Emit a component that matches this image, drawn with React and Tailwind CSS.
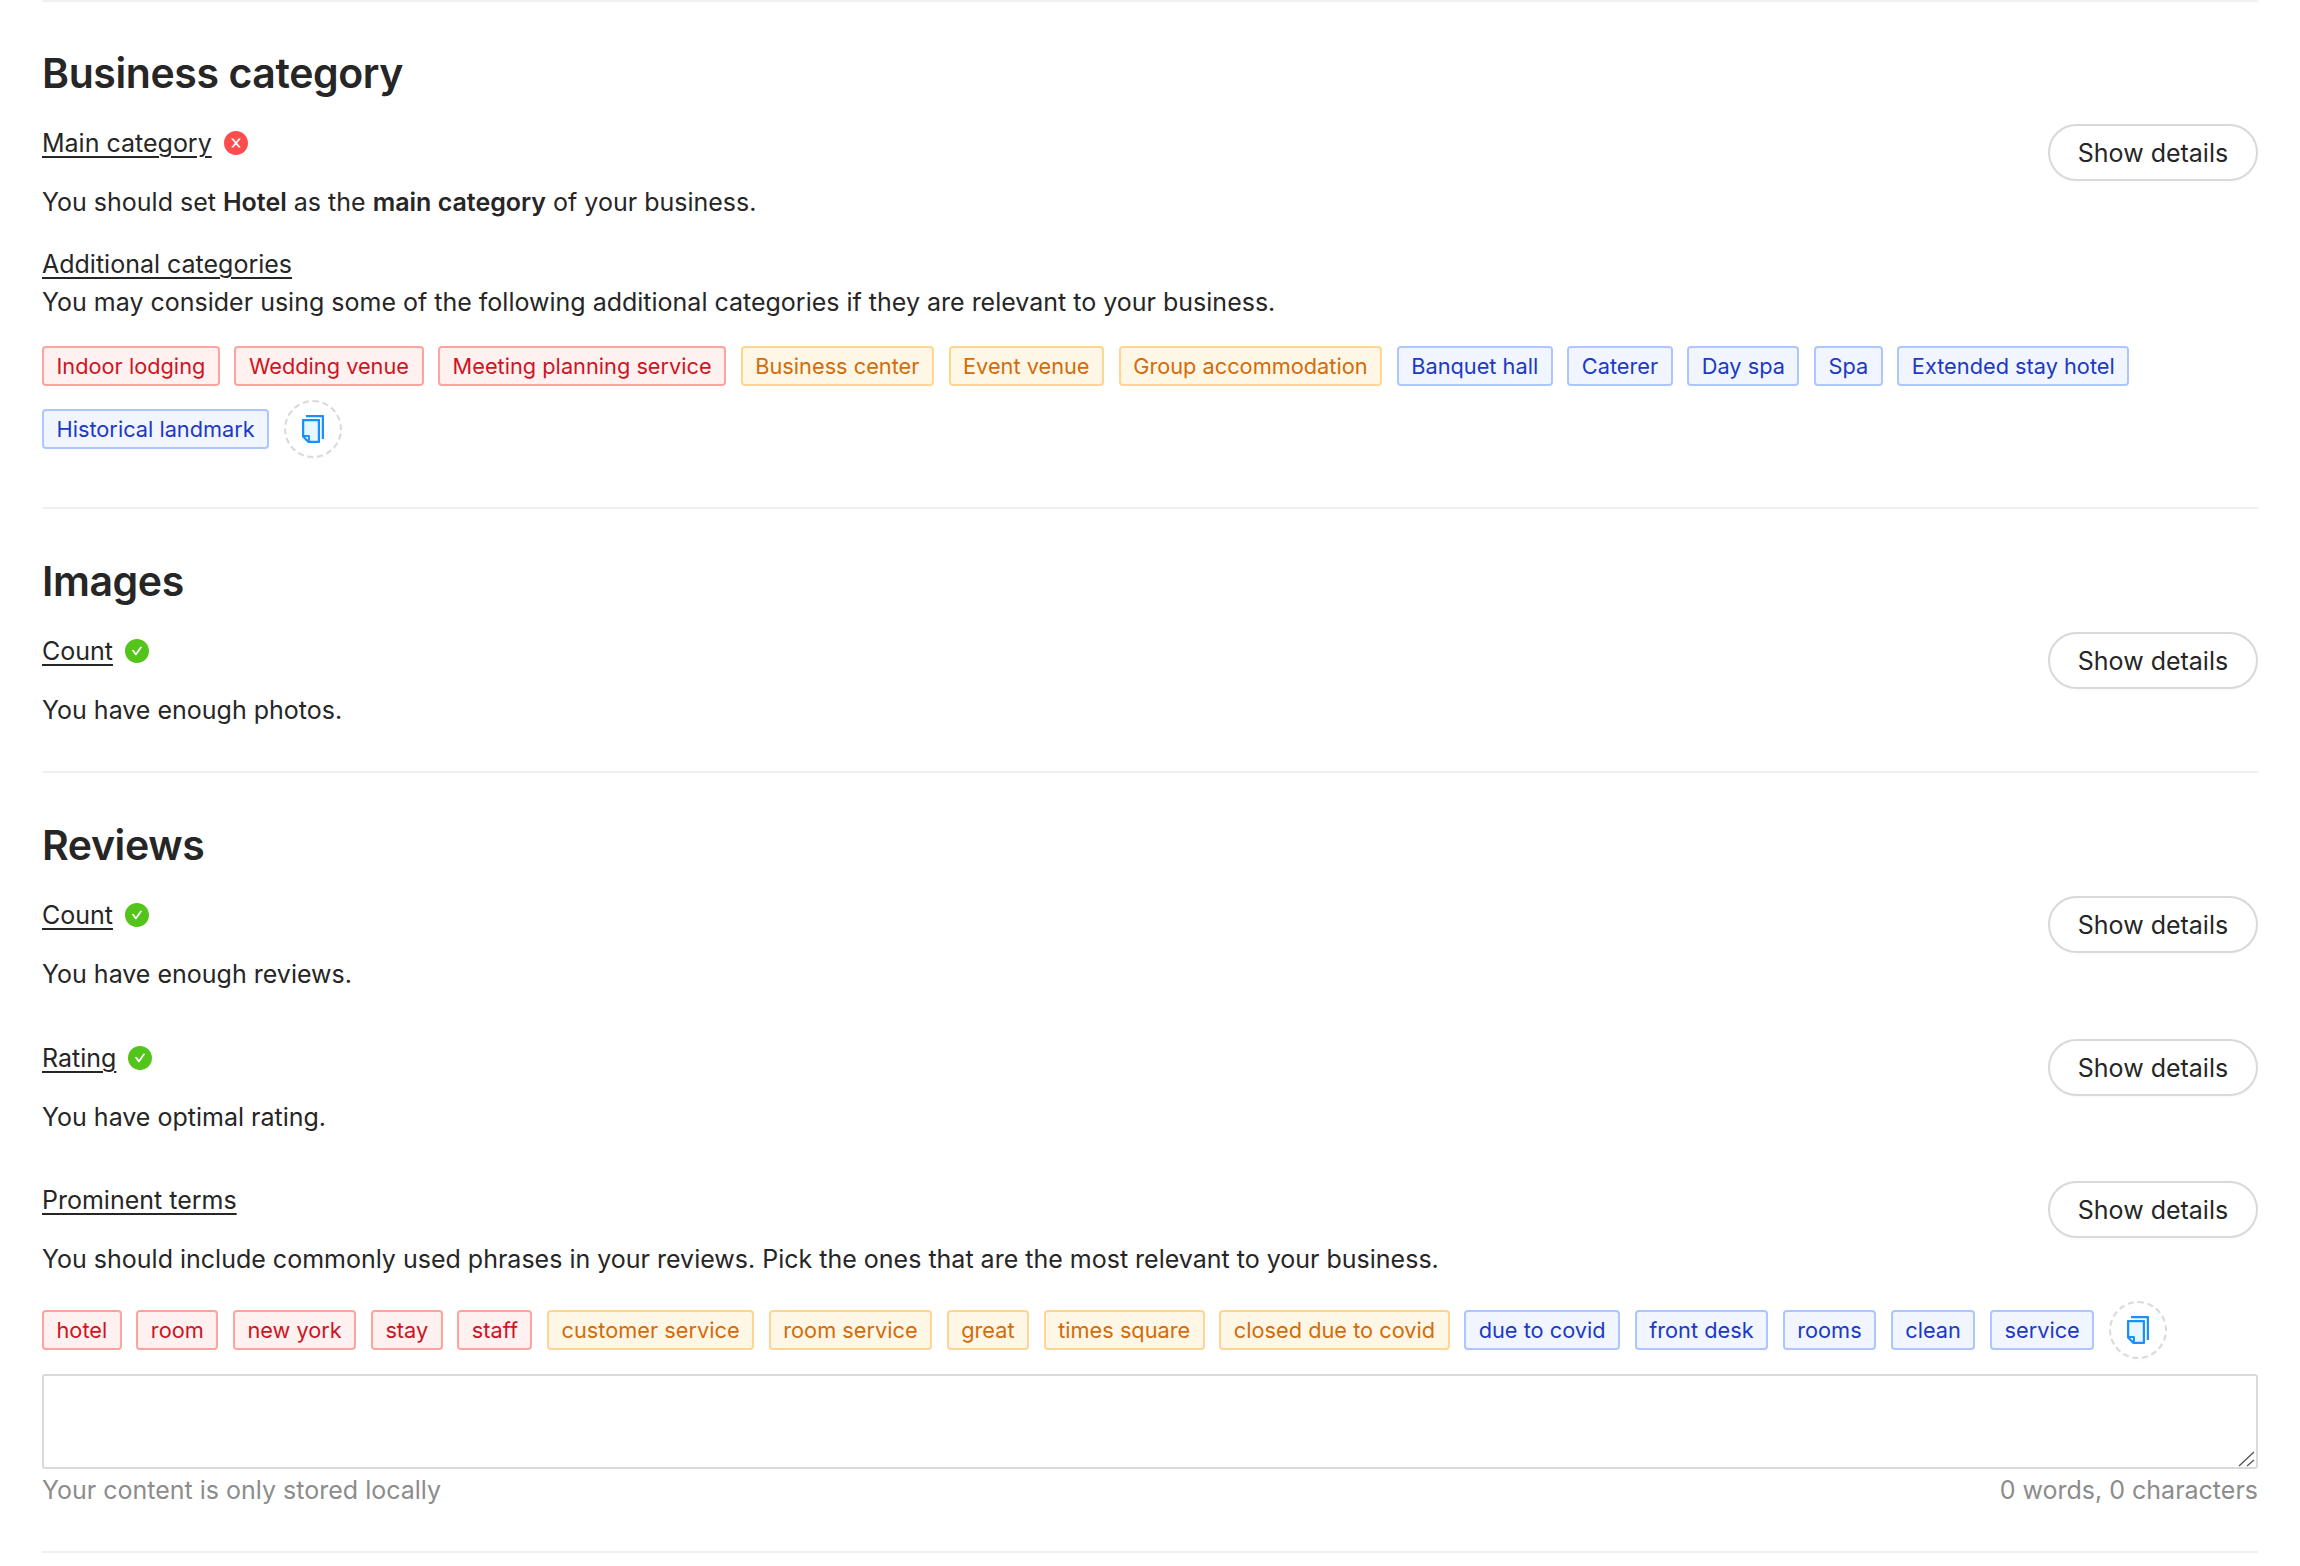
const font = { fontFamily: '"Inter", "Liberation Sans", sans-serif' };

function CopyIcon() {
  return (
    <svg viewBox="64 64 896 896" className="w-[28px] h-[28px]">
      <path fill="#1890ff" d="M832 64H296c-4.4 0-8 3.6-8 8v56c0 4.4 3.6 8 8 8h496v688c0 4.4 3.6 8 8 8h56c4.4 0 8-3.6 8-8V96c0-17.7-14.3-32-32-32z" />
      <path fill="#e6f7ff" d="M232 706h142c22.1 0 40 17.9 40 40v142h250V264H232v442z" />
      <path fill="#1890ff" d="M704 192H192c-17.7 0-32 14.3-32 32v530.7c0 8.5 3.4 16.6 9.4 22.6l173.3 173.3c2.2 2.2 4.7 4 7.4 5.5v1.9h4.2c3.5 1.3 7.2 2 11 2H704c17.7 0 32-14.3 32-32V224c0-17.7-14.3-32-32-32zM350 856.2L263.9 770H350v86.2zM664 888H414V746c0-22.1-17.9-40-40-40H232V264h432v624z" />
    </svg>
  );
}

function Status({ ok }) {
  return (
    <svg viewBox="64 64 896 896" className="w-[24px] h-[24px] ml-[12px] shrink-0">
      {ok ? (
        <path fill="#52c41a" d="M512 64C264.6 64 64 264.6 64 512s200.6 448 448 448 448-200.6 448-448S759.4 64 512 64zm193.5 301.7l-210.6 292a31.8 31.8 0 0 1-51.7 0L318.5 484.9c-3.8-5.3 0-12.7 6.5-12.7h46.9c10.2 0 19.9 4.9 25.9 13.3l71.2 98.8 157.2-218c6-8.3 15.6-13.3 25.9-13.3H699c6.5 0 10.3 7.4 6.5 12.7z" />
      ) : (
        <path fill="#ff4d4f" d="M512 64C264.6 64 64 264.6 64 512s200.6 448 448 448 448-200.6 448-448S759.4 64 512 64zm165.4 618.2l-66-.3L512 563.4l-99.3 118.4-66.1.3c-4.4 0-8-3.5-8-8 0-1.9.7-3.7 1.9-5.2l130.1-155L340.5 359a8.32 8.32 0 0 1-1.9-5.2c0-4.4 3.6-8 8-8l66.1.3L512 464.6l99.3-118.4 66-.3c4.4 0 8 3.5 8 8 0 1.9-.7 3.7-1.9 5.2L553.5 514l130 155c1.2 1.5 1.9 3.3 1.9 5.2 0 4.4-3.6 8-8 8z" />
      )}
    </svg>
  );
}

function Title({ children, status }) {
  return (
    <div className="flex items-center h-[38px]">
      <span className="underline underline-offset-[4px] decoration-[2px]">{children}</span>
      {status === "ok" && <Status ok />}
      {status === "bad" && <Status />}
    </div>
  );
}

function ShowDetails() {
  return (
    <button className="h-[57px] w-[210px] pt-[1px] shrink-0 rounded-full border-2 border-[#d9d9d9] bg-white text-[25px] leading-none text-[#262626] shadow-[0_2px_0_rgba(0,0,0,0.015)]">
      Show details
    </button>
  );
}

function Check({ title, status, children, className }) {
  return (
    <div className={"flex justify-between items-start " + (className || "")}>
      <div>
        <Title status={status}>{title}</Title>
        <p className="mt-[20px] h-[38px] pt-[1px]">{children}</p>
      </div>
      <ShowDetails />
    </div>
  );
}

const tagStyles = {
  red: "bg-[#fff1f0] border-[#ffa39e] text-[#cf1322]",
  orange: "bg-[#fff7e6] border-[#ffd591] text-[#d46b08]",
  blue: "bg-[#f0f5ff] border-[#adc6ff] text-[#1d39c4]",
};

function Tags({ red, orange, blue, className }) {
  const groups = [["red", red], ["orange", orange], ["blue", blue]];
  return (
    <div className={"flex flex-wrap items-center gap-x-[14.6px] gap-y-[14px] " + (className || "")}>
      {groups.map(([c, list]) =>
        list.map((t) => (
          <span key={t} className={"h-[40px] px-[12.5px] pt-[1px] flex items-center rounded-[4px] border-2 text-[21.75px] leading-none whitespace-nowrap " + tagStyles[c]}>
            {t}
          </span>
        ))
      )}
      <button className="w-[58px] h-[58px] rounded-full border-2 border-dashed border-[#d9d9d9] bg-white flex items-center justify-center shadow-[0_2px_0_rgba(0,0,0,0.015)]">
        <CopyIcon />
      </button>
    </div>
  );
}

function Heading({ children, className }) {
  return <h2 className={"mb-[23px] text-[41px] leading-[56px] font-semibold text-[#262626] tracking-[-0.4px] " + (className || "mt-[44px]")}>{children}</h2>;
}

function Divider() {
  return <div className="h-[2px] bg-[#f0f0f0]" />;
}

export default function App() {
  return (
    <div style={font} className="w-[2300px] h-[1566px] overflow-hidden bg-white px-[42px] text-[25px] leading-[38px] text-[#262626]">
      <Divider />
      <section className="pb-[49px]">
        <Heading className="mt-[43px]">Business category</Heading>
        <Check title="Main category" status="bad">
          You should set <b className="font-semibold">Hotel</b> as the <b className="font-semibold">main category</b> of your business.
        </Check>
        <div className="mt-[25px]">
          <Title>Additional categories</Title>
          <p>You may consider using some of the following additional categories if they are relevant to your business.</p>
        </div>
        <Tags
          className="mt-[25px]"
          red={["Indoor lodging", "Wedding venue", "Meeting planning service"]}
          orange={["Business center", "Event venue", "Group accommodation"]}
          blue={["Banquet hall", "Caterer", "Day spa", "Spa", "Extended stay hotel", "Historical landmark"]}
        />
      </section>
      <Divider />
      <section className="pb-[43px]">
        <Heading>Images</Heading>
        <Check title="Count" status="ok">You have enough photos.</Check>
      </section>
      <Divider />
      <section className="pb-[44px]">
        <Heading>Reviews</Heading>
        <Check title="Count" status="ok">You have enough reviews.</Check>
        <Check title="Rating" status="ok" className="mt-[47px]">You have optimal rating.</Check>
        <Check title="Prominent terms" className="mt-[46px]">
          You should include commonly used phrases in your reviews. Pick the ones that are the most relevant to your business.
        </Check>
        <Tags
          className="mt-[24px]"
          red={["hotel", "room", "new york", "stay", "staff"]}
          orange={["customer service", "room service", "great", "times square", "closed due to covid"]}
          blue={["due to covid", "front desk", "rooms", "clean", "service"]}
        />
        <div className="relative mt-[15px]">
          <textarea className="block w-full h-[95px] resize-none rounded-[3px] border-2 border-[#d9d9d9] bg-white" />
          <svg viewBox="0 0 17 16" className="absolute right-[3px] bottom-[2px] w-[17px] h-[16px]">
            <path d="M1 15L16 1M9 15l7-6" stroke="#555" strokeWidth="1.3" fill="none" />
          </svg>
        </div>
        <div className="flex justify-between pt-[2px] h-[38px] text-[#8c8c8c]">
          <span>Your content is only stored locally</span>
          <span>0 words, 0 characters</span>
        </div>
      </section>
      <Divider />
    </div>
  );
}
